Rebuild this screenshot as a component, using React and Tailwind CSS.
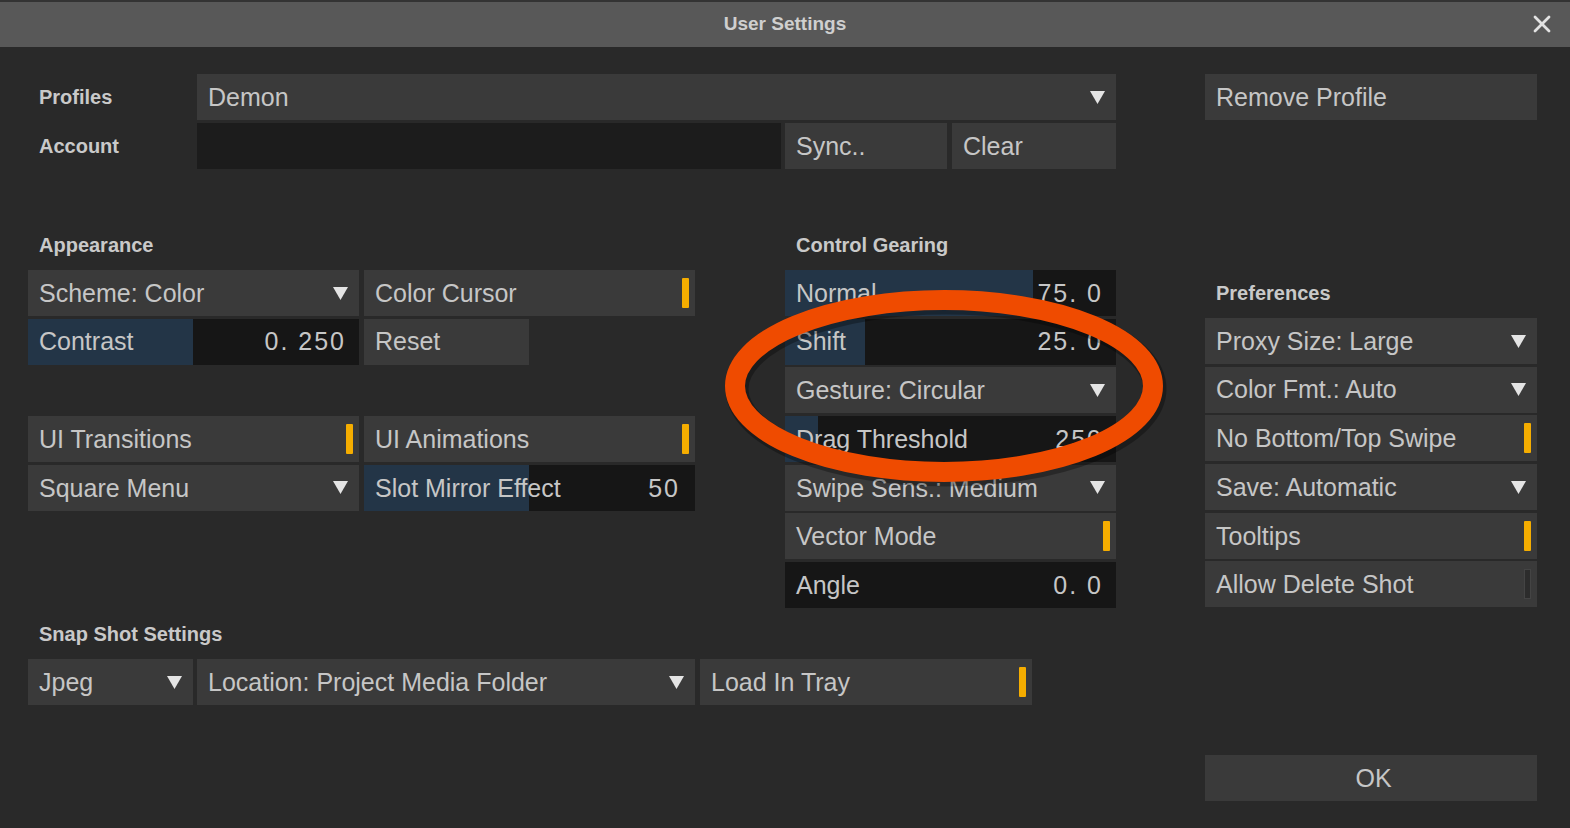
import { X } from 'lucide-react';

const font = { fontFamily: '"Liberation Sans", Arial, sans-serif' };

function Caret() {
  return (
    <svg className="w-[15px] h-[13px] shrink-0" viewBox="0 0 15 13">
      <path d="M0 0 L15 0 L7.5 13 Z" fill="#e4e4e4" />
    </svg>
  );
}

function Toggle({ on = true }) {
  return on ? (
    <span className="w-[7px] h-[30px] bg-[#f5ad00] rounded-[1px] shrink-0" />
  ) : (
    <span className="w-[7px] h-[30px] border border-[#444] bg-[#2c2c2c] shrink-0" />
  );
}

function Btn({ children, caret, toggle, className = '', center }) {
  return (
    <div
      className={`h-[46px] bg-[#3a3a3a] flex items-center pl-[11px] pr-[6px] text-[25px] text-[#c6c6c6] ${
        center ? 'justify-center' : 'justify-between'
      } ${caret ? 'pr-[11px]' : ''} ${className}`}
    >
      <span className="whitespace-nowrap pt-[1px]">{children}</span>
      {caret && <Caret />}
      {toggle !== undefined && <Toggle on={toggle} />}
    </div>
  );
}

function Slider({ label, value, fill, className = '' }) {
  return (
    <div className={`relative h-[46px] bg-[#161616] flex items-center justify-between pl-[11px] pr-[13px] text-[25px] text-[#c6c6c6] ${className}`}>
      <div className="absolute left-0 top-0 bottom-0 bg-[#233547]" style={{ width: fill }} />
      <span className="relative whitespace-nowrap pt-[1px]">{label}</span>
      <span className="relative whitespace-nowrap tracking-[2px] pt-[1px]">{value}</span>
    </div>
  );
}

function SectionLabel({ children }) {
  return (
    <div className="h-[38px] leading-[26px] pl-[11px] text-[20px] font-bold text-[#c9c9c9]">{children}</div>
  );
}

export default function App() {
  return (
    <div className="relative w-[1570px] h-[828px] bg-[#292929] flex flex-col overflow-hidden" style={font}>
      {/* title bar */}
      <div className="h-[47px] bg-[#585858] border-t-2 border-[#333] relative flex items-center justify-center shrink-0">
        <span className="text-[19px] font-bold text-[#cfcfcf]">User Settings</span>
        <X className="absolute right-[14px] top-[8px] w-[28px] h-[28px] text-[#e2e2e2]" strokeWidth={2.4} />
      </div>

      <div className="pl-[28px] pt-[27px] flex flex-col">
        {/* profiles / account */}
        <div className="flex gap-[89px]">
          <div className="w-[1088px] flex flex-col gap-[3px]">
            <div className="flex">
              <div className="w-[169px] pl-[11px] h-[46px] flex items-center text-[20px] font-bold text-[#c9c9c9]">Profiles</div>
              <Btn caret className="w-[919px]">Demon</Btn>
            </div>
            <div className="flex">
              <div className="w-[169px] pl-[11px] h-[46px] flex items-center text-[20px] font-bold text-[#c9c9c9]">Account</div>
              <div className="w-[584px] h-[46px] bg-[#1c1c1c]" />
              <Btn className="w-[162px] ml-[4px]">Sync..</Btn>
              <Btn className="w-[164px] ml-[5px]">Clear</Btn>
            </div>
          </div>
          <Btn className="w-[332px]">Remove Profile</Btn>
        </div>

        {/* main sections */}
        <div className="flex mt-[63px]">
          <div className="w-[667px] flex flex-col">
            <SectionLabel>Appearance</SectionLabel>
            <div className="grid grid-cols-[331px_331px] gap-x-[5px] gap-y-[2.7px] auto-rows-[46px]">
              <Btn caret>Scheme: Color</Btn>
              <Btn toggle={true}>Color Cursor</Btn>
              <Slider label="Contrast" value="0. 250" fill={165} />
              <div className="flex">
                <Btn className="w-[165px]">Reset</Btn>
              </div>
              <div />
              <div />
              <Btn toggle={true}>UI Transitions</Btn>
              <Btn toggle={true}>UI Animations</Btn>
              <Btn caret>Square Menu</Btn>
              <Slider label="Slot Mirror Effect" value="50" fill={165} className="pr-[15px]" />
            </div>
          </div>

          <div className="w-[331px] ml-[90px] flex flex-col">
            <SectionLabel>Control Gearing</SectionLabel>
            <div className="flex flex-col gap-[2.7px]">
              <Slider label="Normal" value="75. 0" fill={248} />
              <Slider label="Shift" value="25. 0" fill={80} />
              <Btn caret>Gesture: Circular</Btn>
              <Slider label="Drag Threshold" value="250" fill={33} />
              <Btn caret>Swipe Sens.: Medium</Btn>
              <Btn toggle={true}>Vector Mode</Btn>
              <Slider label="Angle" value="0. 0" fill={0} />
            </div>
          </div>

          <div className="w-[332px] ml-[89px] pt-[48px] flex flex-col">
            <SectionLabel>Preferences</SectionLabel>
            <div className="flex flex-col gap-[2.7px]">
              <Btn caret>Proxy Size: Large</Btn>
              <Btn caret>Color Fmt.: Auto</Btn>
              <Btn toggle={true}>No Bottom/Top Swipe</Btn>
              <Btn caret>Save: Automatic</Btn>
              <Btn toggle={true}>Tooltips</Btn>
              <Btn toggle={false}>Allow Delete Shot</Btn>
            </div>
          </div>
        </div>

        {/* snapshot + ok */}
        <div className="flex mt-[13px]">
          <div className="w-[1088px] flex flex-col">
            <SectionLabel>Snap Shot Settings</SectionLabel>
            <div className="flex">
              <Btn caret className="w-[165px]">Jpeg</Btn>
              <Btn caret className="w-[498px] ml-[4px]">Location: Project Media Folder</Btn>
              <Btn toggle={true} className="w-[332px] ml-[5px]">Load In Tray</Btn>
            </div>
          </div>
          <div className="ml-[89px] pt-[134px]">
            <Btn center className="w-[332px] pl-0 pr-0">OK</Btn>
          </div>
        </div>
      </div>

      {/* annotation ring */}
      <svg
        className="absolute left-[712px] top-[278px] pointer-events-none"
        width="470"
        height="220"
        viewBox="0 0 470 220"
      >
        <ellipse cx="234" cy="111" rx="209" ry="86" fill="none" stroke="rgba(0,0,0,0.3)" strokeWidth="23" />
        <ellipse cx="232" cy="108" rx="209" ry="86" fill="none" stroke="#ef4b00" strokeWidth="20" />
      </svg>
    </div>
  );
}
